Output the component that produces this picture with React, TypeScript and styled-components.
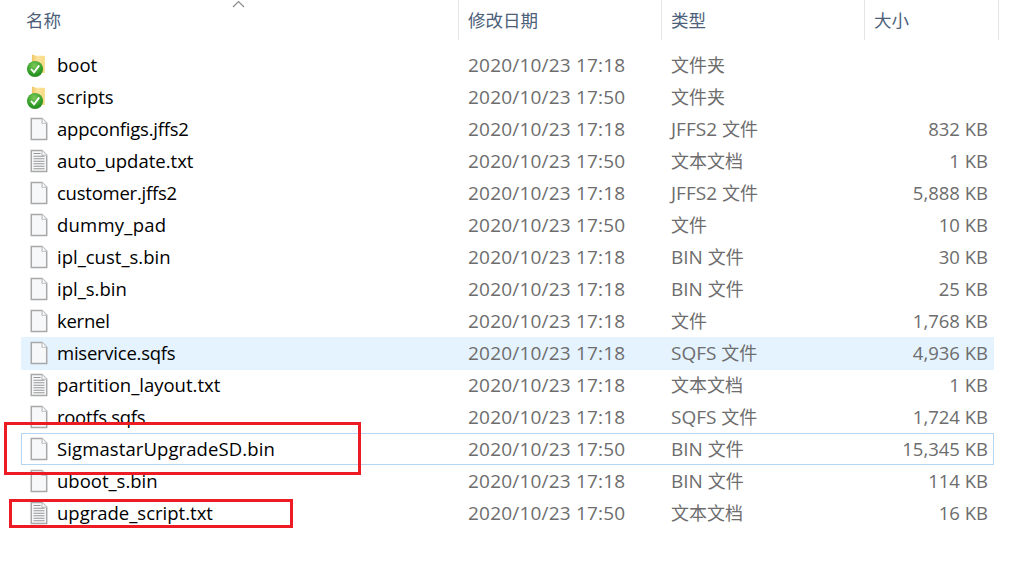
import React from "react";
import styled, { createGlobalStyle } from "styled-components";

const Global = createGlobalStyle`
  html, body { margin: 0; padding: 0; background: #fff; }
  body { font-family: "Open Sans", "Noto Sans CJK SC", sans-serif; }
`;

const Page = styled.div`
  position: relative;
  width: 1033px;
  height: 574px;
  overflow: hidden;
  background: #fff;
  padding-left: 21px;
  box-sizing: border-box;
`;

const Header = styled.div`
  display: grid;
  grid-template-columns: 437px 203px 203px 135px;
  height: 40px;
  margin-bottom: 9px;
`;

const HeaderCell = styled.div<{ $first?: boolean }>`
  position: relative;
  display: flex;
  align-items: center;
  padding-left: ${(p) => (p.$first ? "5px" : "9px")};
  padding-bottom: 2px;
  box-sizing: border-box;
  border-left: ${(p) => (p.$first ? "none" : "1px solid #e5e5e5")};
  border-right: 1px solid transparent;
  font-family: "Noto Sans CJK SC", sans-serif;
  font-size: 17.5px;
  color: #4c607a;
  &:last-child { border-right-color: #e5e5e5; }
`;

const SortArrow = styled.svg`
  position: absolute;
  left: 211px;
  top: 0;
`;

const List = styled.div`
  display: flex;
  flex-direction: column;
  width: 973px;
`;

const Row = styled.div<{ $state?: "hover" | "focus" }>`
  display: grid;
  grid-template-columns: 437px 203px 203px 130px;
  height: 32px;
  align-items: center;
  box-sizing: border-box;
  background: ${(p) => (p.$state === "hover" ? "#e5f3ff" : "transparent")};
  box-shadow: ${(p) =>
    p.$state === "hover"
      ? "0 1px 0 #e5f3ff"
      : p.$state === "focus"
      ? "inset 0 0 0 1px #b4d6f2"
      : "none"};
`;

const NameCell = styled.div`
  display: flex;
  align-items: center;
  height: 100%;
`;

const NameLabel = styled.span<{ $track?: number }>`
  padding-bottom: 2px;
  font-size: 18.5px;
  letter-spacing: ${(p) => p.$track ?? 0}px;
  color: #000;
`;

const IconSlot = styled.div`
  width: 36px;
  height: 100%;
  flex: none;
  display: flex;
  align-items: center;
  padding-left: 5.5px;
  box-sizing: border-box;
`;

const DateCell = styled.div`
  padding-left: 10px;
  font-size: 19px;
  letter-spacing: 0.2px;
  color: #6d6d6d;
  white-space: nowrap;
`;

const TypeCell = styled.div`
  padding: 0 0 2px 10px;
  font-family: "Noto Sans CJK SC", sans-serif;
  font-size: 18px;
  color: #6d6d6d;
  white-space: nowrap;
`;

const TypePrefix = styled.span`
  font-family: "Open Sans", sans-serif;
  font-size: 19px;
`;

const SizeCell = styled.div`
  padding: 0 6px 2px 0;
  font-size: 18.5px;
  text-align: right;
  color: #6d6d6d;
  white-space: nowrap;
`;

const RedBox = styled.div<{ $l: number; $t: number; $w: number; $h: number }>`
  position: absolute;
  left: ${(p) => p.$l}px;
  top: ${(p) => p.$t}px;
  width: ${(p) => p.$w}px;
  height: ${(p) => p.$h}px;
  box-sizing: border-box;
  border: 3px solid #ed1c24;
`;

const FileIcon = () => (
  <svg width="24" height="24" viewBox="-3.5 0 24 24">
    <path d="M0.8 1.5 H11.5 L16.2 6.2 V22.5 H0.8 Z" fill="#f7f8fa" stroke="#a8a8a8" strokeWidth="1.5" />
    <path d="M11.5 1.5 V6.2 H16.2" fill="#fff" stroke="#bbb" strokeWidth="1.1" />
  </svg>
);

const TextIcon = () => (
  <svg width="24" height="24" viewBox="-3.5 0 24 24">
    <path d="M0.8 1.5 H11.5 L16.2 6.2 V22.5 H0.8 Z" fill="#f7f8fa" stroke="#a8a8a8" strokeWidth="1.5" />
    <path d="M11.5 1.5 V6.2 H16.2" fill="#fff" stroke="#bbb" strokeWidth="1.1" />
    <path
      d="M3 4.5 H10 M3 7.2 H14 M3 9.7 H14 M3 12.2 H14 M3 14.7 H14 M3 17.2 H14 M3 19.7 H14"
      stroke="#979797"
      strokeWidth="1.1"
    />
  </svg>
);

const FolderIcon = () => (
  <svg width="24" height="24" viewBox="0 0 24 24">
    <defs>
      <linearGradient id="fold" x1="0" y1="0" x2="1" y2="0">
        <stop offset="0" stopColor="#f0c768" />
        <stop offset="0.45" stopColor="#fbe49f" />
        <stop offset="1" stopColor="#f6d97f" />
      </linearGradient>
      <radialGradient id="badge" cx="0.45" cy="0.3" r="0.8">
        <stop offset="0" stopColor="#7ccb5a" />
        <stop offset="0.65" stopColor="#2f9a27" />
        <stop offset="1" stopColor="#1c7d1b" />
      </radialGradient>
    </defs>
    <path d="M5 1.5 L9 2.8 H17.8 V20 H5 Z" fill="url(#fold)" />
    <circle cx="8" cy="16" r="8" fill="url(#badge)" />
    <path d="M4 16 L7 19.4 L12.2 12.4" fill="none" stroke="#fff" strokeWidth="1.8" />
  </svg>
);

type Kind = "folder" | "file" | "text";
const icons: Record<Kind, React.ReactNode> = {
  folder: <FolderIcon />,
  file: <FileIcon />,
  text: <TextIcon />,
};

const D1 = "2020/10/23 17:18";
const D2 = "2020/10/23 17:50";

type Item = {
  name: string;
  date: string;
  prefix?: string;
  type: string;
  size: string;
  kind: Kind;
  state?: "hover" | "focus";
  track?: number;
};

const files: Item[] = [
  { name: "boot", date: D1, type: "文件夹", size: "", kind: "folder" },
  { name: "scripts", date: D2, type: "文件夹", size: "", kind: "folder" },
  { name: "appconfigs.jffs2", date: D1, prefix: "JFFS2", type: "文件", size: "832 KB", kind: "file", track: -0.23 },
  { name: "auto_update.txt", date: D2, type: "文本文档", size: "1 KB", kind: "text" },
  { name: "customer.jffs2", date: D1, prefix: "JFFS2", type: "文件", size: "5,888 KB", kind: "file", track: -0.24 },
  { name: "dummy_pad", date: D2, type: "文件", size: "10 KB", kind: "file", track: 0.23 },
  { name: "ipl_cust_s.bin", date: D1, prefix: "BIN", type: "文件", size: "30 KB", kind: "file" },
  { name: "ipl_s.bin", date: D1, prefix: "BIN", type: "文件", size: "25 KB", kind: "file" },
  { name: "kernel", date: D1, type: "文件", size: "1,768 KB", kind: "file", track: -0.25 },
  { name: "miservice.sqfs", date: D1, prefix: "SQFS", type: "文件", size: "4,936 KB", kind: "file", state: "hover", track: -0.24 },
  { name: "partition_layout.txt", date: D1, type: "文本文档", size: "1 KB", kind: "text" },
  { name: "rootfs.sqfs", date: D1, prefix: "SQFS", type: "文件", size: "1,724 KB", kind: "file", track: -0.3 },
  { name: "SigmastarUpgradeSD.bin", date: D2, prefix: "BIN", type: "文件", size: "15,345 KB", kind: "file", state: "focus", track: 0.1 },
  { name: "uboot_s.bin", date: D1, prefix: "BIN", type: "文件", size: "114 KB", kind: "file" },
  { name: "upgrade_script.txt", date: D2, type: "文本文档", size: "16 KB", kind: "text" },
];

export default function App() {
  return (
    <>
      <Global />
      <Page>
        <Header>
          <HeaderCell $first>
            名称
            <SortArrow width="13" height="8" viewBox="0 0 13 8">
              <path d="M1 7 L6.5 1.5 L12 7" fill="none" stroke="#8a8a8a" strokeWidth="1.2" />
            </SortArrow>
          </HeaderCell>
          <HeaderCell>修改日期</HeaderCell>
          <HeaderCell>类型</HeaderCell>
          <HeaderCell>大小</HeaderCell>
        </Header>
        <List>
          {files.map((f) => (
            <Row key={f.name} $state={f.state}>
              <NameCell>
                <IconSlot>{icons[f.kind]}</IconSlot>
                <NameLabel $track={f.track}>{f.name}</NameLabel>
              </NameCell>
              <DateCell>{f.date}</DateCell>
              <TypeCell>
                {f.prefix && <TypePrefix>{f.prefix} </TypePrefix>}
                {f.type}
              </TypeCell>
              <SizeCell>{f.size}</SizeCell>
            </Row>
          ))}
        </List>
        <RedBox $l={4} $t={422} $w={357} $h={53} />
        <RedBox $l={9} $t={499} $w={284} $h={29} />
      </Page>
    </>
  );
}
